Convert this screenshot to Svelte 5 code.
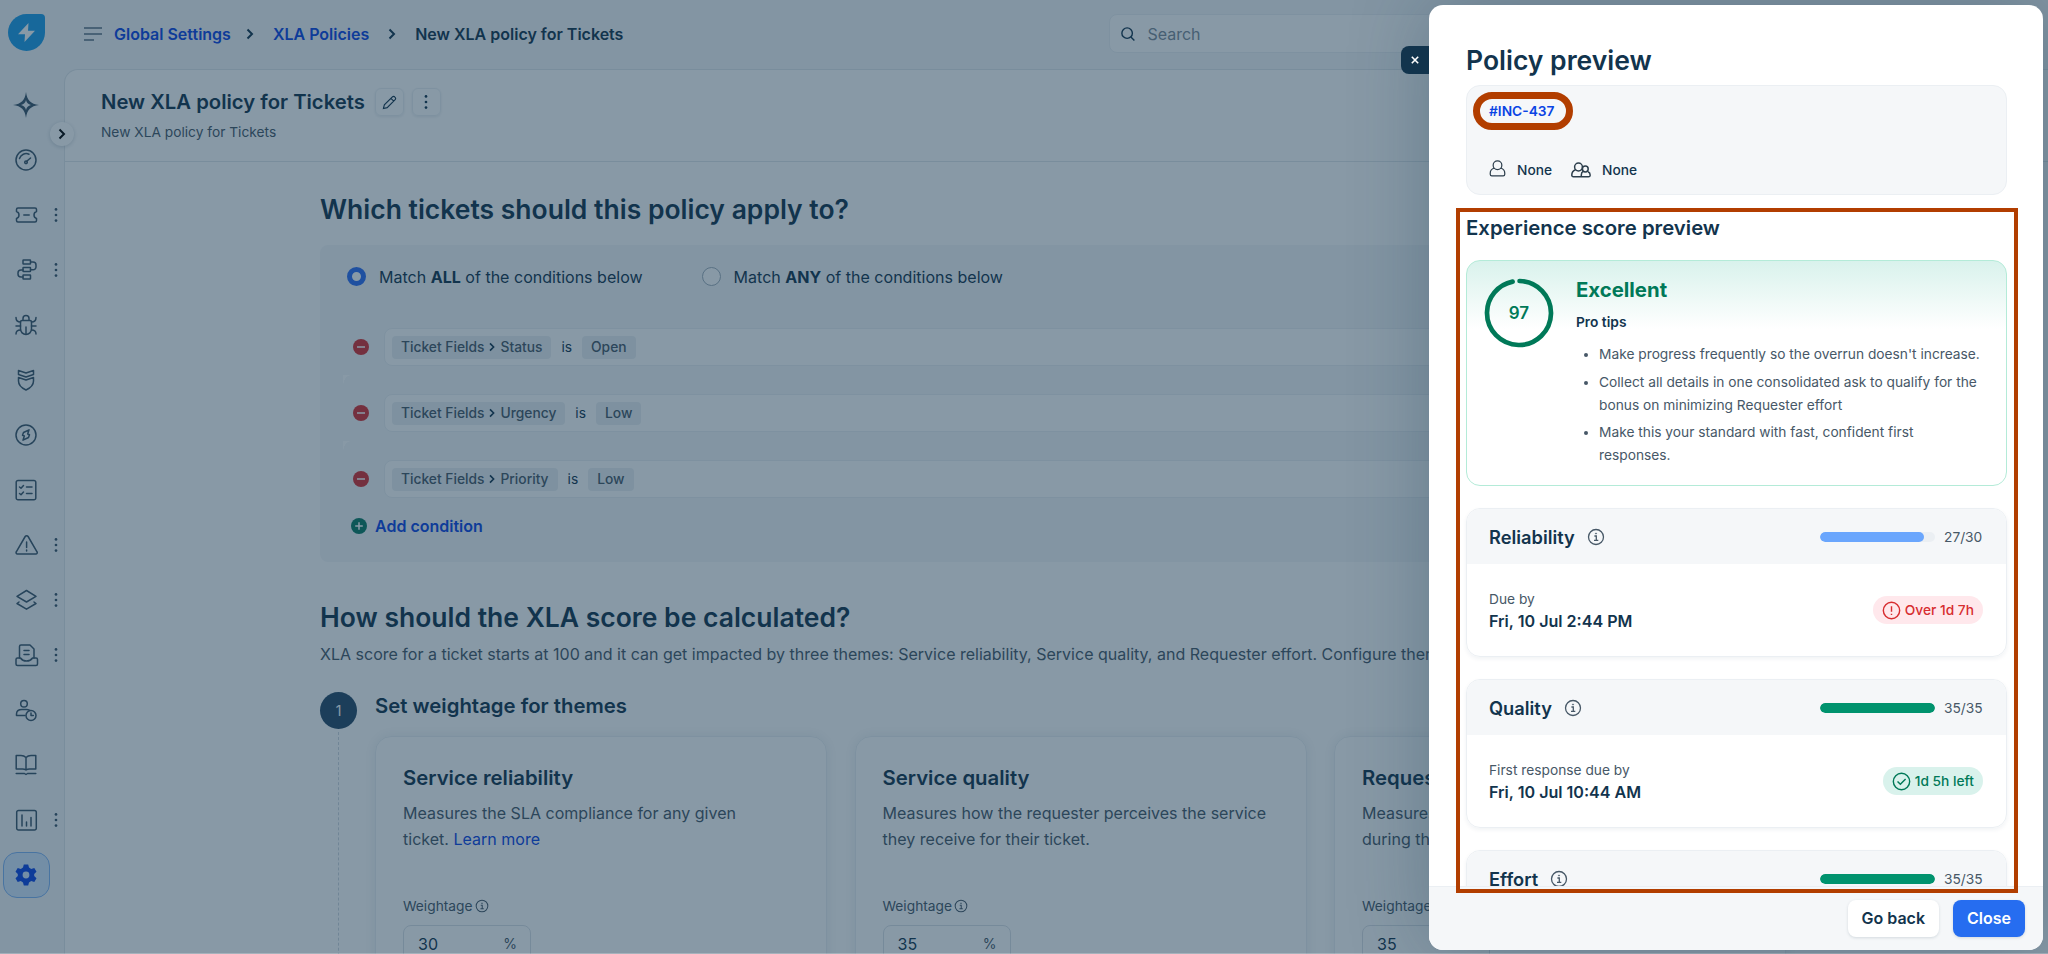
<script lang="ts">
  interface NavItem {
    name: string;
    paths: string[];
    more?: boolean;
    filled?: boolean;
    active?: boolean;
  }

  const navItems: NavItem[] = [
    {
      name: 'Freddy',
      filled: true,
      paths: ['M12-1C13.200 7.500 16.500 10.800 25 12C16.500 13.200 13.200 16.500 12 25C10.800 16.500 7.500 13.200-1 12C7.500 10.800 10.800 7.500 12-1ZM12 7C11.200 10 10 11.200 7 12C10 12.800 11.200 14 12 17C12.800 14 14 12.800 17 12C14 11.200 12.800 10 12 7Z']
    },
    {
      name: 'Dashboard',
      paths: [
        'M12 2a10 10 0 1 0 0 20a10 10 0 1 0 0-20Z',
        'M5.500 10.500A7 7 0 0 1 15 6.200',
        'M12.500 13.500L16.500 10',
        'M12 13a1.300 1.300 0 1 0 0 2.600a1.300 1.300 0 1 0 0-2.600Z'
      ]
    },
    {
      name: 'Tickets',
      more: true,
      paths: [
        'M4 5H21a1.500 1.500 0 0 1 1.500 1.500V8.500a3.700 3.700 0 0 0 0 7V17.500A1.500 1.500 0 0 1 21 19H4A1.500 1.500 0 0 1 2.500 17.500V15.500a3.700 3.700 0 0 0 0-7V6.500A1.500 1.500 0 0 1 4 5Z',
        'M9.800 12H15.200'
      ]
    },
    {
      name: 'Workflows',
      more: true,
      paths: [
        'M9.500 2H16a.5.5 0 0 1 .5.5V5.500a.5.5 0 0 1-.5.5H9.500a.5.5 0 0 1-.5-.5V2.500a.5.5 0 0 1 .5-.5Z',
        'M9.500 9.500H16a.5.5 0 0 1 .5.5V13a.5.5 0 0 1-.5.5H9.500a.5.5 0 0 1-.5-.5V10a.5.5 0 0 1 .5-.5Z',
        'M9.500 17H16a.5.5 0 0 1 .5.5V20.500a.5.5 0 0 1-.5.5H9.500a.5.5 0 0 1-.5-.5V17.500a.5.5 0 0 1 .5-.5Z',
        'M16.500 4H19a3 3 0 0 1 3 3V9a2.800 2.800 0 0 1-2.800 2.800H16.500M9 12H7a3 3 0 0 0-3 3V16a3 3 0 0 0 3 3H9'
      ]
    },
    {
      name: 'Problems',
      paths: [
        'M8 7.500H16A1.500 1.500 0 0 1 17.500 9V16a5.500 5.500 0 0 1-11 0V9A1.500 1.500 0 0 1 8 7.500Z',
        'M9 7V5.500a3 3 0 0 1 6 0V7M12 14V21',
        'M2 4.500C2 7 3.500 9 6.500 9M22 4.500C22 7 20.500 9 17.500 9M2 13H6.500M17.500 13H22M2 21C2 18.500 3.500 17 6.500 17M22 21C22 18.500 20.500 17 17.500 17'
      ]
    },
    {
      name: 'Changes',
      paths: [
        'M4.500 2.500L12 5L19.500 2.500V6.500L12 9L4.500 6.500Z',
        'M4.500 9.500L12 12L19.500 9.500V13C19.500 17 16.500 20 12 22C7.500 20 4.500 17 4.500 13Z'
      ]
    },
    {
      name: 'Releases',
      paths: [
        'M12 2a10 10 0 1 0 0 20a10 10 0 1 0 0-20Z',
        'M15 6.800L9.500 9.500L8.500 12.200L10.300 13L9 17.200L14.500 14.500L15.500 11.800L13.700 11Z'
      ]
    },
    {
      name: 'Tasks',
      paths: [
        'M4 2.500H20A1.800 1.800 0 0 1 21.800 4.300V20A1.800 1.800 0 0 1 20 21.800H4A1.800 1.800 0 0 1 2.200 20V4.300A1.800 1.800 0 0 1 4 2.500Z',
        'M5.500 9L7 10.300L9.500 7.500M12.500 9H18M5.500 15.500L7 16.800L9.500 14M12.500 15.500H18'
      ]
    },
    {
      name: 'Alerts',
      more: true,
      paths: [
        'M11.200 3.500a1.700 1.700 0 0 1 2.900 0L23 18.800a1.400 1.400 0 0 1-1.200 2.200H3.500a1.400 1.400 0 0 1-1.200-2.200Z',
        'M12.600 9V14.500M12.600 17V18'
      ]
    },
    {
      name: 'Assets',
      more: true,
      paths: [
        'M12.500 2.500L22 8.300L12.500 14L3 8.300Z',
        'M5 14L3 15.500L12.500 21.200L22 15.500L20 14'
      ]
    },
    {
      name: 'Purchase orders',
      more: true,
      paths: [
        'M5.500 15V3.500A1.500 1.500 0 0 1 7 2H16L20 6V15',
        'M10 7.500H15M10 11.500H15',
        'M3.500 15H6.500C9 19 16 19 18.500 15H22A1.500 1.500 0 0 1 23.500 16.500V21A1.500 1.500 0 0 1 22 22.500H3.500A1.500 1.500 0 0 1 2 21V16.500A1.500 1.500 0 0 1 3.500 15Z'
      ]
    },
    {
      name: 'Schedules',
      paths: [
        'M10 2.500a3.300 3.300 0 1 0 0 6.600a3.300 3.300 0 1 0 0-6.600Z',
        'M11 17.500H2.500V16C2.500 13 5 11.500 8 11.500H12.500C14 11.500 15 12 16 12.500',
        'M17 12.500a5 5 0 1 0 0 10a5 5 0 1 0 0-10ZM17 15V17.500H19.300'
      ]
    },
    {
      name: 'Knowledge base',
      paths: [
        'M12 4.500C10.500 3 9 2.500 7 2.500H2.200V16H8.500C10 16 11 16.300 12 17C13 16.300 14 16 15.500 16H21.800V2.500H17C15 2.500 13.500 3 12 4.500V17',
        'M2.200 20.500H10.500L12 21.500L13.500 20.500H21.800'
      ]
    },
    {
      name: 'Analytics',
      more: true,
      paths: [
        'M4.500 2.500H20.500A1.800 1.800 0 0 1 22.300 4.300V20.200A1.800 1.800 0 0 1 20.500 22H4.500A1.800 1.800 0 0 1 2.700 20.200V4.300A1.800 1.800 0 0 1 4.500 2.500Z',
        'M8 7V18M12.500 14V18M17 9.500V18'
      ]
    },
    {
      name: 'Admin',
      filled: true,
      active: true,
      paths: ['M9.800 1.500H14.200L15 4.600L17.200 5.900L20.300 5L22.500 8.800L20.200 11V13L22.500 15.200L20.300 19L17.200 18.100L15 19.400L14.200 22.500H9.800L9 19.400L6.800 18.100L3.700 19L1.500 15.200L3.800 13V11L1.500 8.800L3.700 5L6.800 5.900L9 4.600ZM12 8.600A3.400 3.400 0 1 0 12 15.400A3.400 3.400 0 1 0 12 8.600Z']
    }
  ];

  const conditions = [
    { field: 'Status', value: 'Open' },
    { field: 'Urgency', value: 'Low' },
    { field: 'Priority', value: 'Low' }
  ];

  const themes = [
    { title: 'Service reliability', text: 'Measures the SLA compliance for any given\nticket.', link: 'Learn more', weight: 30 },
    { title: 'Service quality', text: 'Measures how the requester perceives the service\nthey receive for their ticket.', weight: 35 },
    { title: 'Requester effort', text: 'Measures the effort put in by the requester\nduring the ticket lifecycle.', weight: 35 }
  ];

  const tips = [
    "Make progress frequently so the overrun doesn't increase.",
    'Collect all details in one consolidated ask to qualify for the bonus on minimizing Requester effort',
    'Make this your standard with fast, confident first responses.'
  ];

  const scores = [
    { title: 'Reliability', score: 27, max: 30, label: 'Due by', date: 'Fri, 10 Jul 2:44 PM', badge: 'Over 1d 7h', state: 'over' },
    { title: 'Quality', score: 35, max: 35, label: 'First response due by', date: 'Fri, 10 Jul 10:44 AM', badge: '1d 5h left', state: 'left' },
    { title: 'Effort', score: 35, max: 35 }
  ];

  let matchMode = $state('ALL');
</script>

{#snippet chevron(cls: string)}
  <svg class={cls} viewBox="0 0 10 12" fill="none" stroke="currentColor"><path d="M2.500 1.500L7 6L2.500 10.500" /></svg>
{/snippet}

{#snippet info()}
  <svg class="info" viewBox="0 0 18 18" fill="none" stroke="currentColor" stroke-width="1.300">
    <circle cx="9" cy="9" r="7.500" />
    <path d="M7.400 8H9.300V12.300M7 12.400H11.300" />
    <circle cx="9" cy="5.500" r=".6" fill="currentColor" stroke-width=".6" />
  </svg>
{/snippet}

{#snippet dots()}
  <svg class="dots" viewBox="0 0 4 16" fill="currentColor"><circle cx="2" cy="2.400" r="1.350" /><circle cx="2" cy="8" r="1.350" /><circle cx="2" cy="13.600" r="1.350" /></svg>
{/snippet}

<div class="app">
  <aside class="sidebar">
    <svg class="logo" viewBox="0 0 37 37">
      <path d="M18.500 0H33a4 4 0 0 1 4 4V18.500a18.500 18.500 0 1 1-18.500-18.500Z" fill="#1c9ce8" />
      <path d="M20.500 9L10 20.300H17L16.500 28L27 16.700H20Z" fill="#fff" />
    </svg>
    <nav>
      {#each navItems as item}
        <button class="nav-item" class:active={item.active} title={item.name}>
          <svg class="nav-icon" class:filled={item.filled} viewBox="0 0 24 24">
            {#each item.paths as d}<path {d} />{/each}
          </svg>
          {#if item.more}<span class="nav-more">{@render dots()}</span>{/if}
        </button>
      {/each}
    </nav>
  </aside>

  <div class="page">
    <header class="topbar">
      <svg class="burger" viewBox="0 0 18 16" fill="none" stroke="currentColor" stroke-width="1.500"><path d="M0 2H18M0 8H18M0 14H10" /></svg>
      <a href="#settings">Global Settings</a>
      {@render chevron('crumb-sep')}
      <a href="#policies">XLA Policies</a>
      {@render chevron('crumb-sep wide')}
      <span class="current">New XLA policy for Tickets</span>
      <div class="search">
        <svg viewBox="0 0 16 16" fill="none" stroke="currentColor" stroke-width="1.500"><circle cx="7" cy="7" r="6" /><path d="M11.300 11.300L15.300 15.300" /></svg>
        Search
      </div>
    </header>

    <main class="panel">
      <div class="policy-header">
        <div class="title-row">
          <h1>New XLA policy for Tickets</h1>
          <button class="icon-btn">
            <svg class="pencil" viewBox="0 0 16 16" fill="none" stroke="currentColor" stroke-width="1.200"><path d="M1.500 14.500L2.500 10.500L10.800 2.200C11.800 1.200 13 1.200 13.800 2.200C14.800 3.200 14.800 4.200 13.800 5.200L5.500 13.500ZM9.500 3.500L12.500 6.500" /></svg>
          </button>
          <button class="icon-btn">{@render dots()}</button>
        </div>
        <p>New XLA policy for Tickets</p>
      </div>

      <div class="content">
        <h2>Which tickets should this policy apply to?</h2>
        <section class="conditions">
          <div class="match-row">
            {#each ['ALL', 'ANY'] as mode}
              <button class="match" onclick={() => (matchMode = mode)}>
                <span class="radio" class:checked={matchMode === mode}></span>
                <span>Match <b>{mode}</b> of the conditions below</span>
              </button>
            {/each}
          </div>
          {#each conditions as cond, i}
            <div class="condition" class:joined={i > 0}>
              <svg class="round-icon remove" viewBox="0 0 16 16"><circle cx="8" cy="8" r="8" /><path d="M4 8H12" /></svg>
              <div class="condition-box">
                <span class="chip"><span>Ticket Fields</span>{@render chevron('chip-sep')}<span>{cond.field}</span></span>
                <span class="is">is</span>
                <span class="chip">{cond.value}</span>
              </div>
            </div>
          {/each}
          <button class="add">
            <svg class="round-icon" viewBox="0 0 16 16"><circle cx="8" cy="8" r="8" /><path d="M4.200 8H11.800M8 4.200V11.800" /></svg>
            Add condition
          </button>
        </section>

        <h2>How should the XLA score be calculated?</h2>
        <p class="lead">XLA score for a ticket starts at 100 and it can get impacted by three themes: Service reliability, Service quality, and Requester effort. Configure them below.</p>

        <div class="step">
          <div class="step-rail">
            <span class="step-num">1</span>
            <span class="step-line"></span>
          </div>
          <div class="step-body">
            <h3>Set weightage for themes</h3>
            <div class="themes">
              {#each themes as theme}
                <div class="theme">
                  <h4>{theme.title}</h4>
                  <p>{theme.text} {#if theme.link}<a href="#learn">{theme.link}</a>{/if}</p>
                  <div class="weight-label">Weightage {@render info()}</div>
                  <div class="weight-input"><span>{theme.weight}</span><span class="pct">%</span></div>
                </div>
              {/each}
            </div>
          </div>
        </div>
      </div>
    </main>
  </div>

  <button class="expand">{@render chevron('expand-icon')}</button>
</div>

<div class="overlay"></div>

<aside class="drawer">
  <button class="drawer-close">
    <svg viewBox="0 0 8 8" fill="none" stroke="currentColor" stroke-width="1.500"><path d="M.8.8L7.200 7.200M7.200.8L.8 7.200" /></svg>
  </button>

  <div class="drawer-body">
    <h2>Policy preview</h2>
    <div class="ticket">
      <span class="ticket-id">#INC-437</span>
      <div class="people">
        <svg class="user" viewBox="0 0 18 18" fill="none" stroke="currentColor" stroke-width="1.300"><circle cx="9" cy="5.500" r="4.600" /><path d="M5.500 8.500C2.500 9.500 1.300 11.500 1.300 14V15A1.700 1.700 0 0 0 3 16.700H15A1.700 1.700 0 0 0 16.700 15V14C16.700 11.500 15.500 9.500 12.500 8.500" /></svg>
        <span>None</span>
        <svg class="users" viewBox="0 0 20 16" fill="none" stroke="currentColor" stroke-width="1.500"><circle cx="7.500" cy="5" r="3.900" /><path d="M4.500 7.700C2 8.500.8 10.300.8 13A1.600 1.600 0 0 0 2.400 14.800H17.500A1.700 1.700 0 0 0 19.200 13.200C19.200 11.500 18.300 10.200 17 9.700" /><circle cx="14.300" cy="7" r="2.900" /><path d="M12.400 9.200C11 10 10.300 11.500 10.300 13V14.500" /></svg>
        <span>None</span>
      </div>
    </div>

    <h3>Experience score preview</h3>
    <section class="score">
      <svg class="ring" viewBox="0 0 70 70">
        <circle cx="35" cy="35" r="32" fill="none" stroke="#007958" stroke-width="4.700" stroke-linecap="round" pathLength="100" stroke-dasharray="96.500 100" transform="rotate(-89 35 35)" />
        <text x="35" y="41" text-anchor="middle">97</text>
      </svg>
      <div class="score-text">
        <h4>Excellent</h4>
        <h5>Pro tips</h5>
        <ul>
          {#each tips as tip}<li>{tip}</li>{/each}
        </ul>
      </div>
    </section>

    {#each scores as s}
      <section class="metric">
        <div class="metric-head">
          <h4>{s.title}</h4>
          {@render info()}
          <div class="bar"><div class="fill" class:partial={s.score < s.max} style="width: {(s.score / s.max) * 100}%"></div></div>
          <span class="ratio">{s.score}/{s.max}</span>
        </div>
        {#if s.label}
          <div class="metric-body">
            <div class="due">
              <div class="due-label">{s.label}</div>
              <div class="due-date">{s.date}</div>
            </div>
            <span class="badge {s.state}">
              <svg viewBox="0 0 20 20" fill="none" stroke="currentColor" stroke-width="1.500">
                <circle cx="10" cy="10" r="8.600" />
                {#if s.state === 'over'}
                  <path d="M10 5.500V11.300M10 13.300V14.800" />
                {:else}
                  <path d="M5.800 10L8.800 13L14.300 7.300" />
                {/if}
              </svg>
              {s.badge}
            </span>
          </div>
        {/if}
      </section>
    {/each}
  </div>

  <footer>
    <button class="btn">Go back</button>
    <button class="btn primary">Close</button>
  </footer>

  <span class="mark mark-id"></span>
  <span class="mark mark-score"></span>
</aside>

<style>
  :global(body) {
    background: #fff;
    overflow: hidden;
  }

  .app, .drawer {
    font-family: Inter, "Liberation Sans", sans-serif;
    color: #12344d;
  }

  .app {
    position: relative;
    display: flex;
    height: 954px;
    width: 2048px;
    overflow: hidden;
    background: #f5f7f9;
  }

  .app *, .drawer, .drawer * {
    box-sizing: border-box;
  }

  h1, h2, h3, h4, h5, p, ul {
    margin: 0;
    font-weight: 600;
  }

  p {
    font-weight: 400;
    color: #475867;
  }

  a {
    color: #0a44e4;
    text-decoration: none;
  }

  button {
    font: inherit;
    color: inherit;
    background: none;
    border: none;
    padding: 0;
    cursor: pointer;
  }

  svg {
    flex: none;
    stroke-width: 2;
  }

  /* Sidebar */
  .sidebar {
    width: 64px;
    flex: none;
    padding-top: 14px;
  }

  .logo {
    display: block;
    width: 37px;
    height: 37px;
    margin-left: 8px;
  }

  nav {
    padding: 31px 0 0 3px;
  }

  .nav-item {
    display: flex;
    align-items: center;
    width: 61px;
    height: 46px;
    margin-bottom: 9px;
    padding-left: 11px;
    color: #3b5468;
  }

  .nav-item.active {
    width: 47px;
    padding-left: 10px;
    border: 1px solid #7fb4f5;
    border-radius: 14px;
    background: #d5e8ff;
    color: #0a44e4;
  }

  .nav-icon {
    width: 24px;
    height: 24px;
    overflow: visible;
    fill: none;
    stroke: currentColor;
    stroke-width: 1.500;
    stroke-linejoin: round;
    stroke-linecap: round;
  }

  .nav-icon.filled {
    fill: currentColor;
    fill-rule: evenodd;
    stroke: none;
  }

  .nav-more {
    margin-left: 16px;
    height: 16px;
  }

  .dots {
    display: block;
    width: 4px;
    height: 16px;
  }

  .expand {
    position: absolute;
    left: 50px;
    top: 122px;
    width: 24px;
    height: 24px;
    display: flex;
    align-items: center;
    justify-content: center;
    border-radius: 50%;
    background: #fff;
    box-shadow: 0 1px 4px rgba(18, 52, 77, 0.2);
    color: #000;
  }

  :global(.expand-icon) {
    width: 10px;
    height: 12px;
    stroke-width: 2.300;
  }

  /* Top bar */
  .page {
    flex: 1;
    display: flex;
    flex-direction: column;
  }

  .topbar {
    height: 69px;
    display: flex;
    align-items: center;
    padding: 0 0 2px 20px;
    font-size: 16px;
    font-weight: 600;
  }

  .burger {
    width: 18px;
    height: 16px;
    margin-right: 12px;
    color: #5a6f80;
    stroke-width: 1.500;
  }

  :global(.crumb-sep) {
    width: 10px;
    height: 12px;
    margin: 0 18px 0 14px;
    stroke-width: 1.700;
  }

  :global(.crumb-sep.wide) {
    margin: 0 18px 0 18px;
  }

  .search {
    display: flex;
    align-items: center;
    gap: 12px;
    margin-left: 486px;
    padding-left: 11px;
    width: 420px;
    height: 39px;
    border: 1px solid #ebeff3;
    border-radius: 8px;
    background: #fff;
    color: #7c8b98;
    font-weight: 400;
  }

  .search svg {
    width: 14px;
    height: 14px;
    color: #12344d;
    stroke-width: 1.600;
  }

  /* Main panel */
  .panel {
    flex: 1;
    min-height: 0;
    overflow: hidden;
    border: 1px solid #e1e6ea;
    border-width: 1px 0 0 1px;
    border-radius: 14px 0 0 0;
    background: #fff;
  }

  .policy-header {
    height: 92px;
    padding: 18px 0 0 36px;
    border-bottom: 1px solid #e1e6ea;
  }

  .title-row {
    display: flex;
    align-items: center;
    gap: 8px;
  }

  h1 {
    font-size: 20.300px;
    line-height: 28px;
    margin-right: 2px;
  }

  .icon-btn {
    display: flex;
    align-items: center;
    justify-content: center;
    width: 29px;
    height: 28px;
    border: 1px solid #ebeff3;
    border-radius: 6px;
    box-shadow: 0 1px 3px rgba(18, 52, 77, 0.1);
  }

  .pencil {
    width: 15px;
    height: 15px;
    stroke-width: 1.200;
  }

  .policy-header p {
    margin-top: 6px;
    font-size: 13.750px;
    line-height: 20px;
  }

  .content {
    width: 1480px;
    padding: 27px 0 0 255px;
  }

  .content h2 {
    font-size: 26.500px;
    line-height: 40px;
    white-space: nowrap;
  }

  .conditions {
    width: 1400px;
    height: 317px;
    margin: 16px 0 35px;
    padding: 19px 24px 0 23px;
    border-radius: 8px;
    background: #f5f7f9;
  }

  .match-row {
    display: flex;
    gap: 59px;
    margin-left: 4px;
    height: 64px;
  }

  .match {
    display: flex;
    align-items: center;
    gap: 13px;
    height: 25px;
    font-size: 16.040px;
  }

  .radio {
    width: 19px;
    height: 19px;
    border: 1px solid #9fadb9;
    border-radius: 50%;
    background: #fff;
  }

  .radio.checked {
    border: 5px solid #2c6df3;
  }

  .condition {
    position: relative;
    display: flex;
    align-items: center;
    gap: 15px;
    height: 38px;
    padding-left: 10px;
    margin-bottom: 28px;
  }

  /* curved corner where a condition joins the one above */
  .joined::before {
    content: "";
    position: absolute;
    left: 0;
    top: -19px;
    width: 8px;
    height: 11px;
    background: radial-gradient(ellipse 8px 11px at 100% 100%, transparent 96%, #fff 100%);
  }

  .round-icon {
    width: 16px;
    height: 16px;
    fill: #0a7a63;
    stroke: #fff;
    stroke-width: 1.500;
  }

  .round-icon circle {
    stroke: none;
  }

  .remove {
    fill: #d72d30;
  }

  .condition-box {
    flex: 1;
    display: flex;
    align-items: center;
    height: 38px;
    padding-left: 7px;
    border: 1px solid #ebeff3;
    border-radius: 8px;
    background: #fff;
    font-size: 13.800px;
  }

  .chip {
    display: flex;
    align-items: center;
    gap: 4px;
    height: 23px;
    padding: 0 9px;
    border-radius: 4px;
    background: #ebeff3;
    color: #475867;
    font-weight: 500;
  }

  :global(.chip-sep) {
    width: 8px;
    height: 10px;
    color: #12344d;
  }

  .is {
    margin: 0 10px;
  }

  .add {
    display: flex;
    align-items: center;
    gap: 8px;
    margin-left: 8px;
    margin-top: -10px;
    font-size: 16px;
    font-weight: 600;
    color: #0a44e4;
  }

  .lead {
    margin-top: 6px;
    font-size: 16.030px;
    line-height: 22px;
    white-space: nowrap;
  }

  .step {
    display: flex;
    gap: 18px;
    margin-top: 27px;
  }

  .step-rail {
    display: flex;
    flex-direction: column;
    align-items: center;
    width: 37px;
  }

  .step-num {
    display: grid;
    place-items: center;
    width: 37px;
    height: 37px;
    border-radius: 50%;
    background: #264966;
    color: #fff;
    font-size: 14px;
  }

  .step-line {
    flex: 1;
    margin-top: 3px;
    border-left: 1px dashed #cfd7df;
  }

  .step h3 {
    font-size: 20.350px;
    line-height: 27px;
    margin-bottom: 17px;
  }

  .themes {
    display: flex;
    gap: 27.500px;
  }

  .theme {
    width: 452px;
    height: 300px;
    flex: none;
    padding: 27px 27px 0;
    border: 1px solid #ebeff3;
    border-radius: 16px;
    box-shadow: 0 0 14px rgba(18, 52, 77, 0.09);
  }

  .theme h4 {
    font-size: 20.350px;
    line-height: 28px;
  }

  .theme p {
    height: 78px;
    margin-top: 8px;
    font-size: 16.050px;
    line-height: 26px;
    white-space: pre-line;
  }

  .weight-label {
    display: flex;
    align-items: center;
    gap: 2px;
    margin-top: 18px;
    font-size: 13.750px;
    color: #475867;
    line-height: 20px;
  }

  .weight-label :global(.info) {
    width: 14px;
    height: 14px;
  }

  .info {
    stroke-width: 1.300;
  }

  .weight-input {
    display: flex;
    justify-content: space-between;
    align-items: center;
    width: 128px;
    height: 37px;
    margin-top: 9px;
    padding: 0 14px;
    border: 1px solid #dbe1e7;
    border-radius: 8px;
    font-size: 16.050px;
  }

  .pct {
    margin-right: -1px;
    color: #475867;
    font-size: 14px;
  }

  .overlay {
    position: absolute;
    inset: 0;
    background: rgba(18, 52, 77, 0.5);
    box-shadow: inset 0 -1px rgba(255, 255, 255, 0.25);
  }

  /* Preview drawer */
  .drawer {
    position: absolute;
    left: 1429px;
    top: 5px;
    width: 614px;
    height: 945px;
    display: flex;
    flex-direction: column;
    border-radius: 14px;
    background: #fff;
    box-shadow: 0 0 80px rgba(18, 52, 77, 0.3);
  }

  .drawer-close {
    position: absolute;
    left: -28px;
    top: 41px;
    width: 28px;
    height: 28px;
    display: grid;
    place-items: center;
    border-radius: 8px 0 0 8px;
    background: #12344d;
    color: #fff;
  }

  .drawer-close svg {
    width: 8px;
    height: 8px;
    stroke-width: 1.600;
  }

  .drawer-body {
    flex: 1;
    min-height: 0;
    overflow: hidden;
    padding: 37px 36px 0 37px;
  }

  .drawer-body h2 {
    font-size: 26.500px;
    line-height: 36px;
  }

  .ticket {
    height: 110px;
    margin-top: 7px;
    padding: 15px 22px;
    border: 1px solid #ebeff3;
    border-radius: 14px;
    background: #f5f7f9;
    font-size: 13.750px;
    font-weight: 500;
  }

  .ticket-id {
    display: block;
    line-height: 20px;
    color: #0a44e4;
    font-weight: 600;
  }

  .people {
    display: flex;
    align-items: center;
    margin-top: 39px;
    line-height: 20px;
  }

  .user {
    width: 17px;
    height: 17px;
    margin: 0 11px 3px 0;
    color: #2c3e4c;
    stroke-width: 1.300;
  }

  .users {
    width: 20px;
    height: 16px;
    margin: 0 11px 0 19px;
    color: #2c3e4c;
    stroke-width: 1.500;
  }

  .drawer-body h3 {
    margin: 20px 0 20px;
    font-size: 20.350px;
    line-height: 25px;
  }

  .score {
    display: flex;
    gap: 22px;
    height: 226px;
    padding: 17px 20px 0 17px;
    border: 1px solid #b4ebd8;
    border-radius: 14px;
    background: linear-gradient(#d9f2ec, #fff 68px);
  }

  .ring {
    width: 70px;
    height: 70px;
  }

  .ring text {
    font-size: 17px;
    font-weight: 600;
    fill: #007958;
    stroke: none;
  }

  .score h4 {
    font-size: 20.350px;
    font-weight: 700;
    line-height: 24px;
    color: #007958;
  }

  .score h5 {
    margin-top: 10px;
    font-size: 13.750px;
    line-height: 20px;
  }

  .score ul {
    margin-top: 11px;
    padding-left: 23px;
    font-size: 13.750px;
    font-weight: 400;
    line-height: 23px;
    color: #475867;
  }

  .score li {
    margin-bottom: 4.500px;
  }

  .metric {
    height: 149px;
    margin-top: 22px;
    border: 1px solid #ebeff3;
    border-radius: 14px;
    overflow: hidden;
    box-shadow: 0 2px 4px rgba(18, 52, 77, 0.06);
  }

  .metric-head {
    display: flex;
    align-items: center;
    height: 55px;
    padding: 0 23px 0 22px;
    background: #f5f7f9;
  }

  .metric-head h4 {
    font-size: 18.250px;
  }

  .metric-head :global(.info) {
    width: 18px;
    height: 18px;
    margin-left: 12px;
    color: #475867;
  }

  .bar {
    width: 115px;
    height: 10px;
    margin-left: auto;
    border-radius: 5px;
    background: #ebeff3;
    overflow: hidden;
  }

  .fill {
    height: 100%;
    border-radius: 5px;
    background: #00936e;
  }

  .fill.partial {
    background: #6aa6fd;
  }

  .ratio {
    width: 39px;
    margin-left: 9px;
    font-size: 13.750px;
    color: #475867;
  }

  .metric-body {
    display: flex;
    align-items: center;
    justify-content: space-between;
    height: 92px;
    padding: 0 23px 0 22px;
  }

  .due {
    padding-top: 2px;
  }

  .due-label {
    font-size: 13.750px;
    line-height: 20px;
    color: #475867;
  }

  .due-date {
    font-size: 16.080px;
    font-weight: 600;
    line-height: 25px;
  }

  .badge {
    display: flex;
    align-items: center;
    gap: 4px;
    height: 28px;
    padding: 0 9px;
    border-radius: 14px;
    font-size: 13.750px;
    font-weight: 500;
  }

  .badge svg {
    width: 19px;
    height: 19px;
    stroke-width: 1.500;
  }

  .badge.over {
    background: #ffe8ec;
    color: #d72d30;
  }

  .badge.left {
    background: #d9f2ec;
    color: #007958;
  }

  footer {
    display: flex;
    justify-content: flex-end;
    gap: 14px;
    height: 64px;
    padding: 13px 18px 0 0;
    border-top: 1px solid #ebeff3;
    border-radius: 0 0 14px 14px;
    background: #f5f7f9;
  }

  .btn {
    height: 37px;
    padding: 0 14px 1px;
    border-radius: 8px;
    background: #fff;
    box-shadow: 0 1px 3px rgba(18, 52, 77, 0.15);
    font-size: 16px;
    font-weight: 600;
  }

  .btn.primary {
    background: #266df0;
    color: #fff;
  }

  /* Callout outlines */
  .mark {
    position: absolute;
    border: 4px solid #b23e00;
    pointer-events: none;
  }

  .mark-id {
    left: 44px;
    top: 87px;
    width: 100px;
    height: 38px;
    border-width: 7px;
    border-radius: 19px;
  }

  .mark-score {
    left: 27px;
    top: 203px;
    width: 562px;
    height: 685px;
  }
</style>
